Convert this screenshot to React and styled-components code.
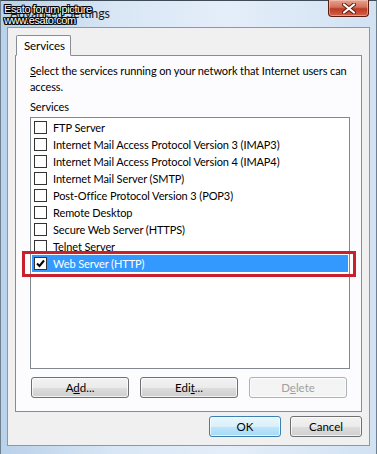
import React from "react";
import styled, { createGlobalStyle } from "styled-components";

const services = [
  { name: "FTP Server", checked: false },
  { name: "Internet Mail Access Protocol Version 3 (IMAP3)", checked: false },
  { name: "Internet Mail Access Protocol Version 4 (IMAP4)", checked: false },
  { name: "Internet Mail Server (SMTP)", checked: false },
  { name: "Post-Office Protocol Version 3 (POP3)", checked: false },
  { name: "Remote Desktop", checked: false },
  { name: "Secure Web Server (HTTPS)", checked: false },
  { name: "Telnet Server", checked: false },
  { name: "Web Server (HTTP)", checked: true, selected: true },
];

export default function App() {
  return (
    <>
      <GlobalStyle />
      <Window>
        <Watermark>
          <span>Esato forum picture</span>
          <span>www.esato.com</span>
        </Watermark>
        <TitleBar>
          <Title>Advanced Settings</Title>
          <CloseButton>
            <svg width="14" height="11" viewBox="0 0 14 11">
              <path d="M2 1.5 L12 9.5 M12 1.5 L2 9.5" stroke="#5a1a10" strokeWidth="4" strokeLinecap="round" />
              <path d="M2 1.5 L12 9.5 M12 1.5 L2 9.5" stroke="#fff" strokeWidth="2.2" strokeLinecap="round" />
            </svg>
          </CloseButton>
        </TitleBar>
        <Client>
          <TabStrip>
            <Tab>Services</Tab>
          </TabStrip>
          <TabPanel>
            <Instruction>
              <u>S</u>elect the services running on your network that Internet users can access.
            </Instruction>
            <Label>Services</Label>
            <ListBox>
              {services.map((s) => (
                <Row key={s.name} $selected={s.selected}>
                  <Check>
                    {s.checked && (
                      <svg width="9" height="9" viewBox="0 0 9 9">
                        <path d="M1 4.5 L3.5 7 L8 1.5" stroke="#000" strokeWidth="2" fill="none" />
                      </svg>
                    )}
                  </Check>
                  {s.name}
                  {s.selected && <Highlight />}
                </Row>
              ))}
            </ListBox>
            <ButtonRow>
              <Button>
                A<u>d</u>d...
              </Button>
              <Button>
                Edi<u>t</u>...
              </Button>
              <Button disabled>
                D<u>e</u>lete
              </Button>
            </ButtonRow>
          </TabPanel>
          <Footer>
            <Button $default $width={72}>OK</Button>
            <Button $width={72}>Cancel</Button>
          </Footer>
        </Client>
      </Window>
    </>
  );
}

const GlobalStyle = createGlobalStyle`
  html, body {
    margin: 0;
    padding: 0;
    background: #fff;
  }
  body {
    font-family: Lato, "Liberation Sans", sans-serif;
    font-size: 11px;
    letter-spacing: -0.1px;
  }
`;

const Window = styled.div`
  position: relative;
  width: 377px;
  height: 454px;
  box-sizing: border-box;
  display: flex;
  flex-direction: column;
  border-top: 1px solid #3d4b57;
  border-left: 1px solid #6e7f8e;
  border-right: 1px solid #6e7f8e;
  background: linear-gradient(90deg, #b9d1ea 0%, #d8e6f5 30%, #e4eef9 60%, #d2e2f3 100%);
`;

const Watermark = styled.div`
  position: absolute;
  left: 3px;
  top: 3px;
  display: flex;
  flex-direction: column;
  font-family: "Liberation Sans", sans-serif;
  font-size: 11px;
  line-height: 11px;
  color: #fff;
  letter-spacing: -0.4px;
  text-shadow: -1px -1px 0 #000, 1px -1px 0 #000, -1px 1px 0 #000, 1px 1px 0 #000,
    0 -1px 0 #000, 0 1px 0 #000, -1px 0 0 #000, 1px 0 0 #000;
  z-index: 2;
`;

const TitleBar = styled.div`
  height: 26px;
  display: flex;
  justify-content: space-between;
  align-items: flex-start;
  padding-left: 9px;
  padding-right: 7px;
`;

const Title = styled.div`
  font-family: Lato, sans-serif;
  font-size: 12.5px;
  color: #1a1a1a;
  margin-top: 5px;
`;

const CloseButton = styled.div`
  width: 41px;
  height: 17px;
  box-sizing: border-box;
  margin-top: -1px;
  border: 1px solid #5b1c12;
  border-top: none;
  border-radius: 0 0 4px 4px;
  background: linear-gradient(180deg, #e4a594 0%, #d5705a 45%, #bd3a22 55%, #d2634a 100%);
  box-shadow: inset 0 0 0 1px rgba(255, 210, 190, 0.5);
  display: flex;
  align-items: center;
  justify-content: center;
`;

const Client = styled.div`
  flex: 1;
  margin: 0 6px 8px 6px;
  border: 1px solid #8a99a6;
  background: #f0f0f0;
  display: flex;
  flex-direction: column;
  padding: 7px 7px 0 7px;
`;

const TabStrip = styled.div`
  display: flex;
  height: 21px;
  margin-bottom: -1px;
  position: relative;
  z-index: 1;
`;

const Tab = styled.div`
  padding: 0 7px;
  width: 55px;
  box-sizing: border-box;
  margin-left: 1px;
  border: 1px solid #898c95;
  border-bottom: 1px solid #fcfcfe;
  border-radius: 2px 2px 0 0;
  background: #fcfcfe;
  color: #000;
  display: flex;
  align-items: center;
  font-size: 11.5px;
`;

const TabPanel = styled.div`
  height: 357px;
  box-sizing: border-box;
  border: 1px solid #898c95;
  background: #fcfcfe;
  padding: 7px 12px 0 14px;
  display: flex;
  flex-direction: column;
`;

const Instruction = styled.div`
  line-height: 16px;
  color: #000;
  width: 322px;
`;

const Label = styled.div`
  margin-top: 4px;
  line-height: 16px;
`;

const ListBox = styled.div`
  margin-top: 2px;
  height: 252px;
  width: 320px;
  box-sizing: border-box;
  border: 1px solid #828790;
  background: #fff;
  padding: 1px 1px;
`;

const Row = styled.div`
  position: relative;
  height: 17px;
  display: flex;
  align-items: center;
  padding-left: 2px;
  gap: 6px;
  background: ${(p) => (p.$selected ? "#3399ff" : "transparent")};
  color: ${(p) => (p.$selected ? "#fff" : "#000")};
`;

const Check = styled.span`
  width: 11px;
  height: 11px;
  flex: none;
  border: 1px solid #333;
  background: #fff;
  display: flex;
  align-items: center;
  justify-content: center;
`;

const Highlight = styled.div`
  position: absolute;
  left: -10px;
  right: -8px;
  top: -4px;
  bottom: -5px;
  border: 3px solid #c8202d;
  pointer-events: none;
`;

const ButtonRow = styled.div`
  display: flex;
  gap: 11px;
  margin-top: 8px;
  margin-left: 1px;
`;

const Button = styled.button`
  width: ${(p) => p.$width || 98}px;
  height: 21px;
  padding: 0;
  font-family: Lato, "Liberation Sans", sans-serif;
  font-size: 11.5px;
  color: #000;
  border-radius: 3px;
  border: 1px solid ${(p) => (p.$default ? "#3c7fb1" : "#707070")};
  background: ${(p) =>
    p.$default
      ? "linear-gradient(180deg, #eaf6fd 0%, #d9f0fc 50%, #bee6fd 51%, #a7d9f5 100%)"
      : "linear-gradient(180deg, #f2f2f2 0%, #ebebeb 50%, #dddddd 51%, #cfcfcf 100%)"};
  box-shadow: inset 0 0 0 1px rgba(255, 255, 255, 0.7);

  &:disabled {
    color: #a0a0a0;
    border-color: #adb2b5;
    background: #f4f4f4;
  }
`;

const Footer = styled.div`
  display: flex;
  justify-content: flex-end;
  gap: 9px;
  padding: 4px 0 0 0;
`;
